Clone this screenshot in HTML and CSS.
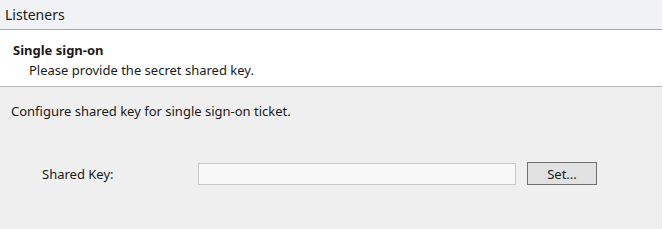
FILE: index.html
```html
<!DOCTYPE html>
<html lang="en">
<head>
    <meta charset="UTF-8">
    <meta name="viewport" content="width=device-width, initial-scale=1.0">
    <title>Listeners</title>
    <link rel="stylesheet" href="styles.css">
</head>
<body>
    <div class="page">
        <div class="title-bar">Listeners</div>

        <div class="banner">
            <div class="banner-title">Single sign-on</div>
            <div class="banner-desc">Please provide the secret shared key.</div>
        </div>

        <div class="content">
            <p class="intro">Configure shared key for single sign-on ticket.</p>

            <div class="field-row">
                <label class="field-label" for="shared-key">Shared Key:</label>
                <input class="key-input" id="shared-key" type="text">
                <button class="set-button">Set...</button>
            </div>
        </div>
    </div>
</body>
</html>
```

FILE: styles.css
```css
* {
    margin: 0;
    padding: 0;
    box-sizing: border-box;
}

html, body {
    height: 100%;
}

body {
    font-family: 'Noto Sans', 'Open Sans', sans-serif;
    font-size: 13px;
    color: #1a1a1a;
    background: #eeeeee;
}

.page {
    height: 100%;
    border-right: 1px solid #ffffff;
    display: flex;
    flex-direction: column;
}

.title-bar {
    height: 30px;
    line-height: 29px;
    padding-left: 5px;
    font-size: 14px;
    background: #f0f2f5;
    border-bottom: 1px solid #aaaaaa;
}

.banner {
    height: 57px;
    padding: 10px 0 0 13px;
    background: #ffffff;
    border-bottom: 1px solid #b4b4b4;
    line-height: 20px;
}

.banner-title {
    font-weight: bold;
}

.banner-desc {
    padding-left: 16px;
}

.content {
    flex: 1;
    padding: 14px 0 0 11px;
    background: #efefef;
}

.intro {
    line-height: 20px;
}

.field-row {
    display: flex;
    align-items: center;
    margin-top: 41px;
    height: 23px;
}

.field-label {
    width: 187px;
    padding-left: 31px;
}

.key-input {
    width: 318px;
    height: 22px;
    background: #f8f8f8;
    border: 1px solid #c8c8c8;
    font: inherit;
}

.set-button {
    width: 70px;
    height: 23px;
    margin-left: 11px;
    background: #e1e1e1;
    border: 1px solid #707070;
    font: inherit;
    color: #1a1a1a;
}
```
